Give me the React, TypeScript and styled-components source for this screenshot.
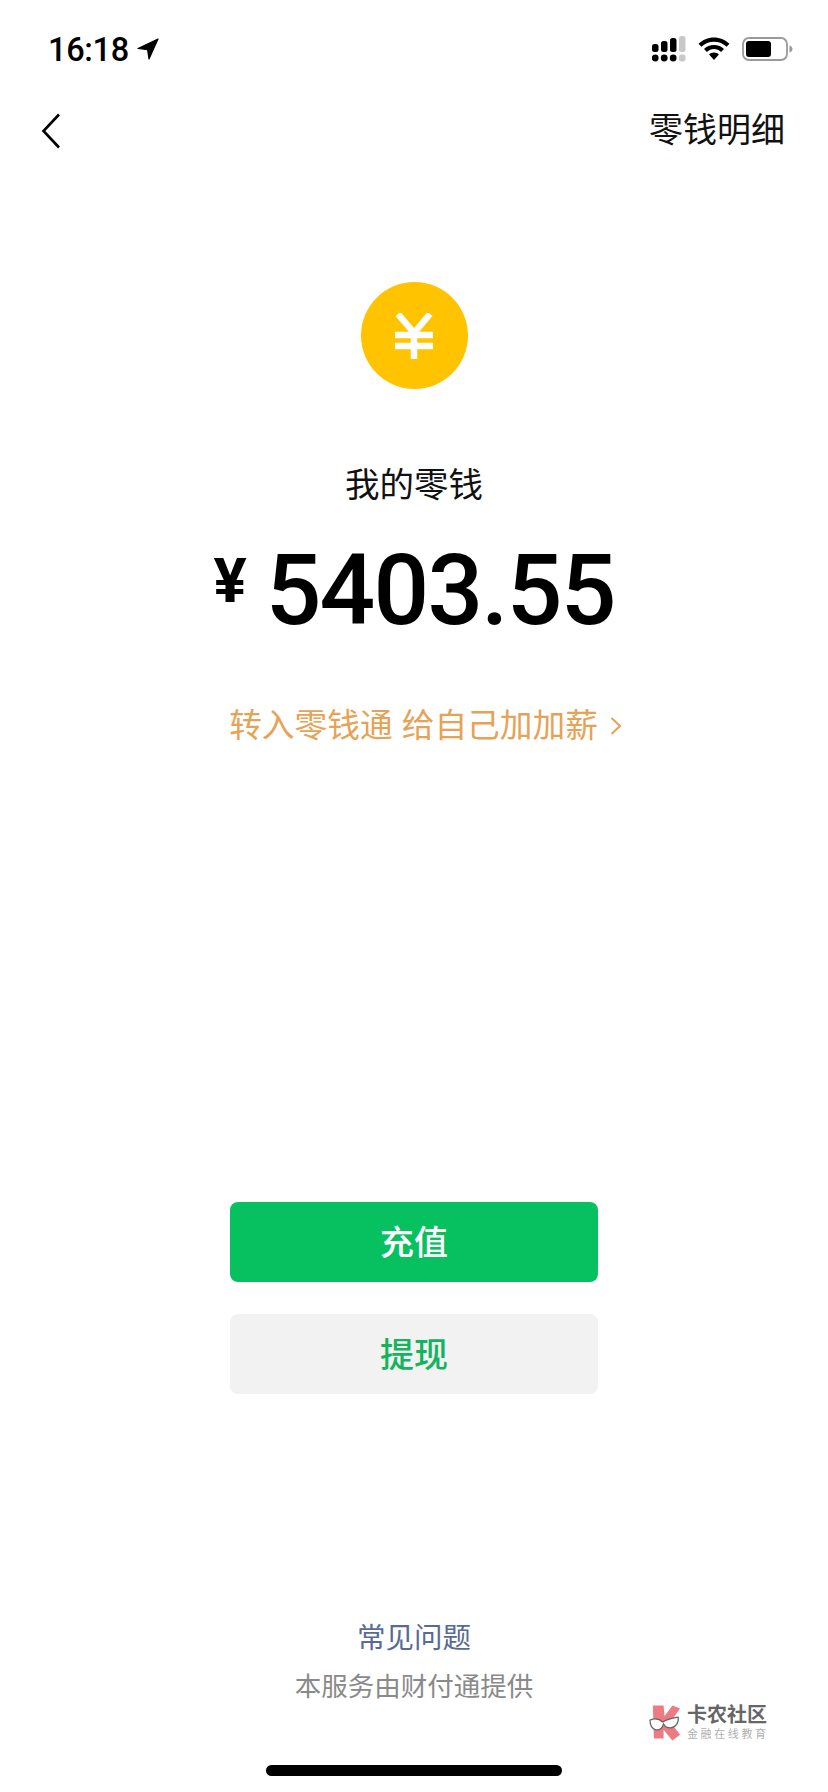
import styled, { createGlobalStyle } from "styled-components";

const GlobalStyle = createGlobalStyle`
  html, body {
    margin: 0;
    padding: 0;
    background: #fff;
  }
  body {
    font-family: "Liberation Sans", "Noto Sans CJK SC", sans-serif;
  }
`;

export default function App() {
  return (
    <Page>
      <GlobalStyle />
      <StatusBar>
        <StatusLeft>
          <Time>16:18</Time>
          <svg width="22" height="22" viewBox="0 0 22 22">
            <path d="M21 1 L1 10.5 L10.6 11.6 L12 21 Z" fill="#000" stroke="#000" strokeWidth="1.2" strokeLinejoin="round" />
          </svg>
        </StatusLeft>
        <StatusRight>
          <svg width="34" height="26" viewBox="0 0 34 26">
            <g fill="#000">
              <rect x="0" y="8" width="6.5" height="8" rx="2.5" />
              <rect x="9" y="5" width="6.5" height="11" rx="2.5" />
              <rect x="18" y="2" width="6.5" height="14" rx="2.5" />
              <circle cx="3.2" cy="22" r="3.4" />
              <circle cx="12.2" cy="22" r="3.4" />
              <circle cx="21.2" cy="22" r="3.4" />
            </g>
            <g fill="#c8c8c8">
              <rect x="27" y="0" width="6.5" height="16" rx="2.5" />
              <rect x="27" y="18.6" width="6.5" height="7" rx="2.5" />
            </g>
          </svg>
          <svg width="32" height="24" viewBox="0 0 32 24">
            <path d="M16 0.5 C10 0.5 4.6 2.9 0.5 6.8 L3.4 9.8 C6.7 6.6 11.1 4.7 16 4.7 C20.9 4.7 25.3 6.6 28.6 9.8 L31.5 6.8 C27.4 2.9 22 0.5 16 0.5 Z" fill="#000" />
            <path d="M16 8 C12.1 8 8.6 9.5 6 12 L8.9 15 C10.8 13.2 13.3 12.1 16 12.1 C18.7 12.1 21.2 13.2 23.1 15 L26 12 C23.4 9.5 19.9 8 16 8 Z" fill="#000" />
            <path d="M16 15.5 C14.1 15.5 12.4 16.2 11.1 17.4 L16 23 L20.9 17.4 C19.6 16.2 17.9 15.5 16 15.5 Z" fill="#000" />
          </svg>
          <svg width="51" height="24" viewBox="0 0 51 24">
            <rect x="1" y="1" width="44" height="22" rx="6" fill="none" stroke="#9a9a9a" strokeWidth="1.8" />
            <rect x="4" y="4" width="25" height="16" rx="3" fill="#000" />
            <path d="M47.5 8.5 C49.5 9.2 50.5 10.4 50.5 12 C50.5 13.6 49.5 14.8 47.5 15.5 Z" fill="#9a9a9a" />
          </svg>
        </StatusRight>
      </StatusBar>

      <NavBar>
        <svg width="20" height="36" viewBox="0 0 20 36">
          <path d="M18 1.5 L2.5 18 L18 34.5" fill="none" stroke="#000" strokeWidth="2.6" />
        </svg>
        <NavAction>零钱明细</NavAction>
      </NavBar>

      <Summary>
        <CoinBadge>
          <svg width="40" height="46" viewBox="0 0 40 46">
            <path d="M4 1 L20 20 L36 1 M1 22 H39 M1 33 H39 M20 20 V46" fill="none" stroke="#fff" strokeWidth="6.5" />
          </svg>
        </CoinBadge>
        <BalanceLabel>我的零钱</BalanceLabel>
        <Balance>
          <Currency>¥</Currency>
          <Amount>5403.55</Amount>
        </Balance>
        <Promo>
          转入零钱通 给自己加加薪
          <svg width="12" height="20" viewBox="0 0 12 20">
            <path d="M1.5 2 L10 10 L1.5 18" fill="none" stroke="#e6a255" strokeWidth="2" />
          </svg>
        </Promo>
      </Summary>

      <Actions>
        <ActionButton $primary>充值</ActionButton>
        <ActionButton>提现</ActionButton>
      </Actions>

      <Footer>
        <FaqLink>常见问题</FaqLink>
        <Provider>本服务由财付通提供</Provider>
      </Footer>

      <Watermark>
        <svg width="35" height="37" viewBox="0 0 36 37">
          <path d="M4 1 H15 L16 12 L24 1 L32 4 L22 18 L32 31 L24 37 L15 26 V35 H5 Z" fill="#ee7b84" />
          <path d="M1 16 C6 14 11 15 14 18 C18 15 24 14 30 13 C31 19 27 24 22 24 C18 24 16 22 15 20 C14 24 11 27 7 26 C3 25 1 21 1 16 Z" fill="#fff" stroke="#666" strokeWidth="1.3" />
        </svg>
        <WatermarkText>
          <WatermarkName>卡农社区</WatermarkName>
          <WatermarkSlogan>金融在线教育</WatermarkSlogan>
        </WatermarkText>
      </Watermark>

      <HomeIndicator />
    </Page>
  );
}

const Page = styled.div`
  position: relative;
  width: 828px;
  height: 1792px;
  overflow: hidden;
  background: #fff;
  display: flex;
  flex-direction: column;
  align-items: center;
`;

const StatusBar = styled.div`
  width: 100%;
  box-sizing: border-box;
  height: 98px;
  padding: 0 35px 0 48px;
  display: flex;
  align-items: center;
  justify-content: space-between;
`;

const StatusLeft = styled.div`
  display: flex;
  align-items: center;
  gap: 8px;
`;

const Time = styled.span`
  font-family: Roboto, "Liberation Sans", sans-serif;
  font-size: 32.5px;
  font-weight: 500;
  line-height: 38px;
  padding-top: 2px;
  letter-spacing: -0.3px;
  color: #000;
`;

const StatusRight = styled.div`
  display: flex;
  align-items: center;
  gap: 12px;
`;

const NavBar = styled.div`
  width: 100%;
  box-sizing: border-box;
  height: 66px;
  padding: 0 43px 0 41px;
  display: flex;
  align-items: center;
  justify-content: space-between;
`;

const NavAction = styled.span`
  font-size: 34px;
  line-height: 44px;
  padding-bottom: 2px;
  color: #111;
`;

const Summary = styled.div`
  margin-top: 118px;
  display: flex;
  flex-direction: column;
  align-items: center;
`;

const CoinBadge = styled.div`
  width: 107px;
  height: 107px;
  border-radius: 50%;
  background: #ffc300;
  display: flex;
  align-items: center;
  justify-content: center;
`;

const BalanceLabel = styled.div`
  margin-top: 74px;
  font-size: 34.5px;
  line-height: 44px;
  color: #111;
`;

const Balance = styled.div`
  margin-top: 33px;
  display: flex;
  align-items: flex-start;
  color: #000;
  height: 102px;
`;

const Currency = styled.span`
  font-family: Roboto, "Liberation Sans", sans-serif;
  font-size: 62px;
  font-weight: 700;
  line-height: 72px;
  margin: 5px 19px 0 0;
`;

const Amount = styled.span`
  font-family: Roboto, "Liberation Sans", sans-serif;
  font-size: 98px;
  font-weight: 500;
  line-height: 102px;
  letter-spacing: -1.8px;
`;

const Promo = styled.div`
  margin-top: 62px;
  margin-left: 23px;
  display: flex;
  align-items: center;
  gap: 12px;
  font-size: 32.7px;
  line-height: 44px;
  color: #e6a255;
`;

const Actions = styled.div`
  margin-top: 454px;
  display: flex;
  flex-direction: column;
  gap: 32px;
`;

const ActionButton = styled.button<{ $primary?: boolean }>`
  width: 368px;
  height: 80px;
  border: 0;
  border-radius: 8px;
  padding: 0 0 4px;
  font-family: "Liberation Sans", "Noto Sans CJK SC", sans-serif;
  font-size: 34px;
  font-weight: 500;
  background: ${({ $primary }) => ($primary ? "#07c160" : "#f2f2f2")};
  color: ${({ $primary }) => ($primary ? "#fff" : "#14b35f")};
`;

const Footer = styled.div`
  margin-top: 225px;
  display: flex;
  flex-direction: column;
  align-items: center;
  gap: 11px;
`;

const FaqLink = styled.div`
  font-size: 28.5px;
  line-height: 38px;
  color: #576b95;
`;

const Provider = styled.div`
  font-size: 26.5px;
  line-height: 38px;
  color: #8a8a8a;
`;

const Watermark = styled.div`
  position: absolute;
  left: 649px;
  top: 1704px;
  display: flex;
  align-items: center;
  gap: 3px;
`;

const WatermarkText = styled.div`
  display: flex;
  flex-direction: column;
  align-items: flex-start;
`;

const WatermarkName = styled.span`
  font-size: 20px;
  font-weight: 700;
  line-height: 23px;
  color: #666;
`;

const WatermarkSlogan = styled.span`
  font-size: 11px;
  line-height: 14px;
  letter-spacing: 2.6px;
  color: #b0b0b0;
`;

const HomeIndicator = styled.div`
  position: absolute;
  left: 266px;
  bottom: 16px;
  width: 296px;
  height: 11px;
  border-radius: 6px;
  background: #000;
`;
